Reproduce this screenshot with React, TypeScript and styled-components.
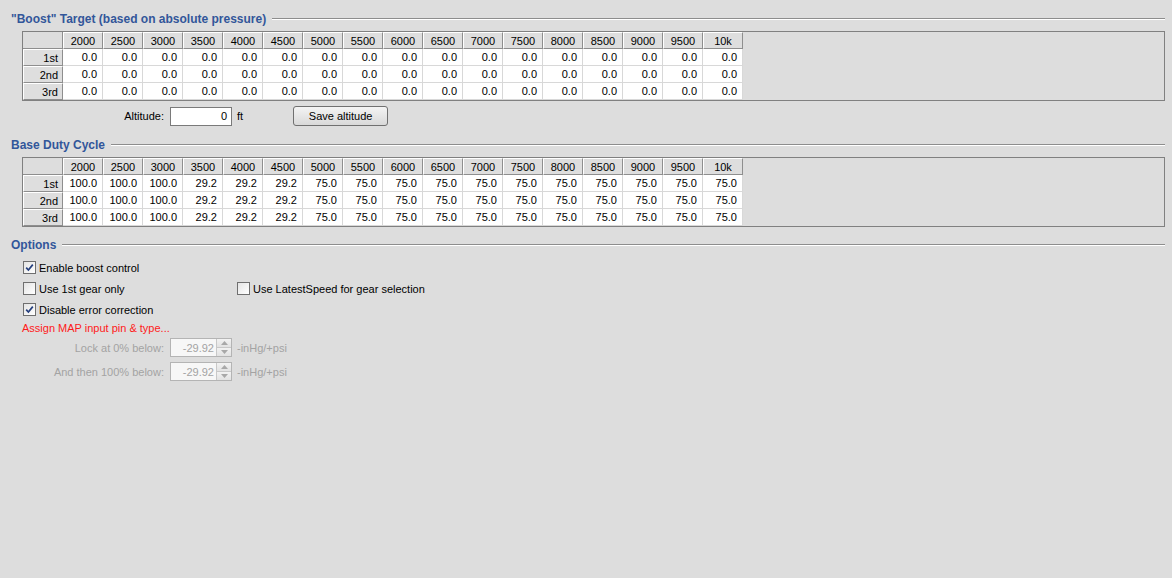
import styled, { createGlobalStyle } from 'styled-components';

const GlobalStyle = createGlobalStyle`
  html, body {
    margin: 0;
    padding: 0;
    background: #dddddd;
  }
  body {
    font-family: "Liberation Sans", Arial, sans-serif;
    font-size: 11px;
    color: #000;
  }
`;

const Page = styled.div`
  min-height: 100vh;
  box-sizing: border-box;
  padding: 11px 7px 0 11px;
  background: #dddddd;
`;

const Section = styled.div`
  margin-bottom: 10px;
`;

const TitleRow = styled.div`
  display: flex;
  align-items: center;
  gap: 6px;
  height: 16px;
  margin-bottom: 4px;
`;

const Title = styled.span`
  font-size: 12px;
  font-weight: bold;
  color: #32569a;
  white-space: nowrap;
`;

const Etched = styled.div`
  flex: 1;
  height: 0;
  border-top: 1px solid #8d8d8d;
  border-bottom: 1px solid #ffffff;
`;

const TableBox = styled.div`
  margin-left: 11px;
  border: 1px solid #808080;
`;

const Grid = styled.div`
  display: grid;
  grid-template-columns: repeat(18, 40px);
  grid-auto-rows: 17px;
`;

const Corner = styled.div`
  border-right: 1px solid #8e8e8e;
  border-bottom: 1px solid #8e8e8e;
  box-sizing: border-box;
`;

const HeadCell = styled.div<{ $right?: boolean }>`
  box-sizing: border-box;
  display: flex;
  align-items: center;
  justify-content: ${(p) => (p.$right ? 'flex-end' : 'center')};
  padding-right: ${(p) => (p.$right ? '4px' : '0')};
  background: #dedede;
  border-top: 1px solid #ffffff;
  border-left: 1px solid #ffffff;
  border-right: 1px solid #8e8e8e;
  border-bottom: 1px solid #8e8e8e;
  white-space: nowrap;
`;

const DataCell = styled.div`
  box-sizing: border-box;
  display: flex;
  align-items: center;
  justify-content: flex-end;
  padding-right: 5px;
  background: #ffffff;
  border-right: 1px solid #d8d8d8;
  border-bottom: 1px solid #d8d8d8;
`;

const FieldRow = styled.div<{ $top?: number }>`
  display: flex;
  align-items: center;
  height: 20px;
  margin-top: ${(p) => p.$top ?? 0}px;
  margin-left: 11px;
`;

const FieldLabel = styled.span<{ $disabled?: boolean }>`
  width: 142px;
  text-align: right;
  margin-right: 6px;
  color: ${(p) => (p.$disabled ? '#a3a3a3' : '#000')};
  white-space: nowrap;
`;

const TextBox = styled.div`
  box-sizing: border-box;
  width: 62px;
  height: 19px;
  border: 1px solid #7a7a7a;
  background: #ffffff;
  display: flex;
  align-items: center;
  justify-content: flex-end;
  padding-right: 4px;
`;

const Unit = styled.span<{ $disabled?: boolean }>`
  margin-left: 5px;
  color: ${(p) => (p.$disabled ? '#a3a3a3' : '#000')};
`;

const Button = styled.button`
  box-sizing: border-box;
  margin-left: 50px;
  width: 95px;
  height: 20px;
  border: 1px solid #707070;
  border-radius: 3px;
  background: linear-gradient(#f4f4f4, #e6e6e6 50%, #d9d9d9);
  font-family: "Liberation Sans", Arial, sans-serif;
  font-size: 11px;
  color: #000;
  padding: 0;
`;

const OptionsBody = styled.div`
  padding-left: 11px;
`;

const CheckRow = styled.div<{ $top?: number }>`
  display: flex;
  align-items: center;
  height: 21px;
  margin-top: ${(p) => p.$top ?? 0}px;
`;

const CheckItem = styled.label<{ $width?: number }>`
  display: flex;
  align-items: center;
  gap: 3px;
  margin-left: 1px;
  width: ${(p) => (p.$width ? `${p.$width}px` : 'auto')};
  white-space: nowrap;
`;

const Box = styled.span`
  box-sizing: border-box;
  width: 13px;
  height: 13px;
  border: 1px solid #6f6f6f;
  background: linear-gradient(135deg, #e4e4e4, #ffffff);
  display: flex;
  align-items: center;
  justify-content: center;
`;

const Warning = styled.div`
  color: #ff1a1a;
  height: 16px;
  line-height: 16px;
`;

const SpinRow = styled.div<{ $top: number }>`
  display: flex;
  align-items: center;
  height: 19px;
  margin-top: ${(p) => p.$top}px;
`;

const Spinner = styled.div`
  box-sizing: border-box;
  display: flex;
  width: 62px;
  height: 19px;
  border: 1px solid #b4b4b4;
  background: #f7f7f7;
`;

const SpinValue = styled.div`
  flex: 1;
  display: flex;
  align-items: center;
  justify-content: flex-end;
  padding-right: 2px;
  color: #a3a3a3;
`;

const SpinButtons = styled.div`
  width: 14px;
  display: flex;
  flex-direction: column;
  border-left: 1px solid #c8c8c8;
`;

const SpinHalf = styled.div`
  flex: 1;
  display: flex;
  align-items: center;
  justify-content: center;
  background: linear-gradient(#f2f2f2, #e2e2e2);
  & + & {
    border-top: 1px solid #c8c8c8;
  }
`;

const cols = ['2000', '2500', '3000', '3500', '4000', '4500', '5000', '5500', '6000', '6500', '7000', '7500', '8000', '8500', '9000', '9500', '10k'];
const gears = ['1st', '2nd', '3rd'];
const boost = cols.map(() => '0.0');
const duty = cols.map((_, i) => (i < 3 ? '100.0' : i < 6 ? '29.2' : '75.0'));

const DataTable = ({ values }: { values: string[] }) => (
  <TableBox>
    <Grid>
      <Corner />
      {cols.map((c) => (
        <HeadCell key={c}>{c}</HeadCell>
      ))}
      {gears.map((g) => [
        <HeadCell key={g} $right>
          {g}
        </HeadCell>,
        ...values.map((v, i) => <DataCell key={g + i}>{v}</DataCell>),
      ])}
    </Grid>
  </TableBox>
);

const Check = ({ label, checked, width }: { label: string; checked?: boolean; width?: number }) => (
  <CheckItem $width={width}>
    <Box>
      {checked && (
        <svg width="9" height="9" viewBox="0 0 9 9">
          <polyline points="1.2,4.6 3.4,7 7.8,1.6" fill="none" stroke="#253f7e" strokeWidth="1.7" />
        </svg>
      )}
    </Box>
    {label}
  </CheckItem>
);

const Arrow = ({ up }: { up?: boolean }) => (
  <svg width="7" height="4" viewBox="0 0 7 4">
    <polygon points={up ? '0,4 3.5,0 7,4' : '0,0 3.5,4 7,0'} fill="#a8a8a8" />
  </svg>
);

const SpinField = ({ label, top }: { label: string; top: number }) => (
  <SpinRow $top={top}>
    <FieldLabel $disabled>{label}</FieldLabel>
    <Spinner>
      <SpinValue>-29.92</SpinValue>
      <SpinButtons>
        <SpinHalf>
          <Arrow up />
        </SpinHalf>
        <SpinHalf>
          <Arrow />
        </SpinHalf>
      </SpinButtons>
    </Spinner>
    <Unit $disabled>-inHg/+psi</Unit>
  </SpinRow>
);

export default function App() {
  return (
    <>
      <GlobalStyle />
      <Page>
        <Section style={{ marginBottom: 11 }}>
          <TitleRow>
            <Title>"Boost" Target (based on absolute pressure)</Title>
            <Etched />
          </TitleRow>
          <DataTable values={boost} />
          <FieldRow $top={5}>
            <FieldLabel>Altitude:</FieldLabel>
            <TextBox>0</TextBox>
            <Unit>ft</Unit>
            <Button>Save altitude</Button>
          </FieldRow>
        </Section>
        <Section>
          <TitleRow>
            <Title>Base Duty Cycle</Title>
            <Etched />
          </TitleRow>
          <DataTable values={duty} />
        </Section>
        <Section>
          <TitleRow>
            <Title>Options</Title>
            <Etched />
          </TitleRow>
          <OptionsBody>
            <CheckRow $top={3}>
              <Check label="Enable boost control" checked />
            </CheckRow>
            <CheckRow>
              <Check label="Use 1st gear only" width={213} />
              <Check label="Use LatestSpeed for gear selection" />
            </CheckRow>
            <CheckRow>
              <Check label="Disable error correction" checked />
            </CheckRow>
            <Warning>Assign MAP input pin &amp; type...</Warning>
            <SpinField label="Lock at 0% below:" top={2} />
            <SpinField label="And then 100% below:" top={5} />
          </OptionsBody>
        </Section>
      </Page>
    </>
  );
}
